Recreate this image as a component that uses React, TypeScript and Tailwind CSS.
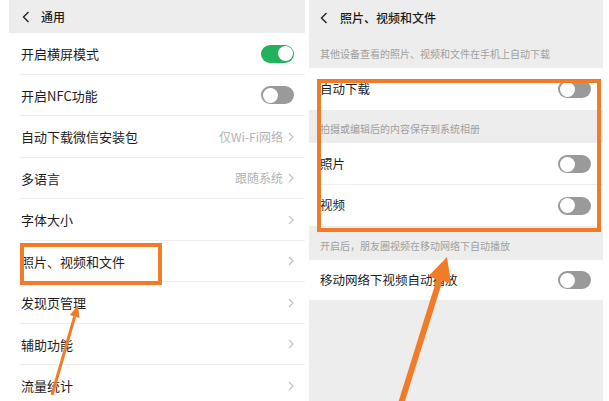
import React from 'react';

const font = { fontFamily: '"Noto Sans CJK SC", "Noto Sans", sans-serif' };

function Toggle({ on }: { on?: boolean }) {
  return (
    <div
      className={`flex items-center w-[33px] h-[18px] rounded-full p-[1.5px] ${
        on ? 'bg-[#21b25b] justify-end' : 'bg-[#9a9a9a] justify-start'
      }`}
    >
      <div className="h-[15px] w-[15px] rounded-full bg-white" />
    </div>
  );
}

function Chevron({ className = '' }: { className?: string }) {
  return (
    <svg width="6" height="10" viewBox="0 0 6 10" className={className}>
      <polyline points="1,1 5,5 1,9" fill="none" stroke="#c2c2c2" strokeWidth="1.2" />
    </svg>
  );
}

function BackChevron() {
  return (
    <svg width="8" height="12" viewBox="0 0 8 12">
      <polyline points="6.5,1 1.5,6 6.5,11" fill="none" stroke="#222" strokeWidth="1.4" />
    </svg>
  );
}

const leftRows: { label: string; toggle?: boolean; on?: boolean; value?: string }[] = [
  { label: '开启横屏模式', toggle: true, on: true },
  { label: '开启NFC功能', toggle: true },
  { label: '自动下载微信安装包', value: '仅Wi-Fi网络' },
  { label: '多语言', value: '跟随系统' },
  { label: '字体大小' },
  { label: '照片、视频和文件' },
  { label: '发现页管理' },
  { label: '辅助功能' },
  { label: '流量统计' },
];

function LeftPanel() {
  return (
    <div className="ml-[9px] w-[296px] shrink-0 bg-white">
      <div className="h-[33px] bg-[#ededed] flex items-center pl-[13px] gap-[11px]">
        <BackChevron />
        <span className="text-[12px] font-medium text-[#1a1a1a]">通用</span>
      </div>
      {leftRows.map((row) => (
        <div key={row.label} className="h-[41.5px] pl-[12px] pr-[11px] flex items-center relative">
          <span className="flex-1 text-[13px] text-[#1e1e1e]">{row.label}</span>
          {row.toggle ? (
            <Toggle on={row.on} />
          ) : (
            <div className="flex items-center gap-[5px]">
              {row.value && <span className="text-[12px] text-[#b4b4b4]">{row.value}</span>}
              <Chevron />
            </div>
          )}
          <div className="absolute left-[11px] right-0 bottom-0 h-px bg-[#efefef]" />
        </div>
      ))}
    </div>
  );
}

function SectionLabel({ text, h }: { text: string; h: string }) {
  return (
    <div className={`${h} flex items-end pb-[7px] pl-[11px] text-[10px] text-[#a0a0a0]`}>{text}</div>
  );
}

function RightRow({ label, h, divider }: { label: string; h: string; divider?: boolean }) {
  return (
    <div className={`${h} bg-white flex items-center pl-[11px] pr-[12px] relative`}>
      <span className="flex-1 text-[12.5px] text-[#1e1e1e]">{label}</span>
      <Toggle />
      {divider && <div className="absolute left-[11px] right-0 bottom-0 h-px bg-[#efefef]" />}
    </div>
  );
}

function RightPanel() {
  return (
    <div className="ml-[4px] w-[294px] shrink-0 bg-[#ededed] flex flex-col">
      <div className="h-[40px] flex items-center pl-[11px] gap-[12px] pb-[4px]">
        <BackChevron />
        <span className="text-[12px] font-medium text-[#1a1a1a]">照片、视频和文件</span>
      </div>
      <SectionLabel h="h-[28px]" text="其他设备查看的照片、视频和文件在手机上自动下载" />
      <RightRow h="h-[42px]" label="自动下载" />
      <SectionLabel h="h-[33px]" text="拍摄或编辑后的内容保存到系统相册" />
      <RightRow h="h-[42px]" label="照片" divider />
      <RightRow h="h-[41px]" label="视频" />
      <SectionLabel h="h-[34px]" text="开启后，朋友圈视频在移动网络下自动播放" />
      <RightRow h="h-[40px]" label="移动网络下视频自动播放" />
    </div>
  );
}

export default function App() {
  return (
    <div className="relative w-[609px] h-[401px] overflow-hidden bg-white flex" style={font}>
      <LeftPanel />
      <RightPanel />

      {/* annotation boxes */}
      <div className="absolute left-[20px] top-[243px] w-[142px] h-[42px] border-[4px] border-[#f27b2a]" />
      <div className="absolute left-[317px] top-[79px] w-[284px] h-[153px] border-[4px] border-[#f27b2a]" />

      {/* annotation arrows */}
      <svg className="absolute inset-0 pointer-events-none" width="609" height="401" viewBox="0 0 609 401">
        <line x1="52" y1="395" x2="74.7" y2="316.5" stroke="#f27b2a" strokeWidth="3" />
        <polygon points="78,305 79.5,318 69.9,315.1" fill="#f27b2a" />
        <line x1="399" y1="410" x2="439.7" y2="279.9" stroke="#f27b2a" strokeWidth="6" />
        <polygon points="447,257 451.1,283.5 428.3,276.3" fill="#f27b2a" />
      </svg>
    </div>
  );
}
